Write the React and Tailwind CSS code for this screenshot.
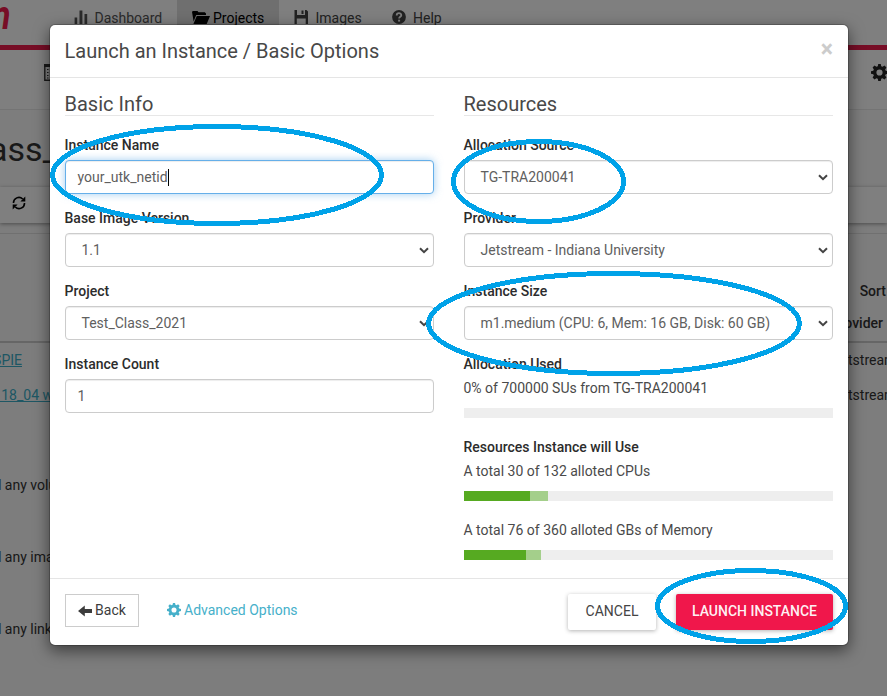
import React from "react";

const GearIcon = ({ className }) => (
  <svg viewBox="0 0 16 16" className={className} fill="currentColor">
    <path
      fillRule="evenodd"
      d="M6.8 0h2.4l.4 2.1 1.3.6L12.700 1.500l1.800 1.800-1.200 1.800.6 1.300 2.100.4v2.400l-2.100.4-.6 1.300 1.200 1.800-1.800 1.800-1.800-1.200-1.300.6-.4 2.100H6.800l-.4-2.100-1.300-.6-1.800 1.200-1.800-1.800 1.200-1.800-.6-1.300L0 9.200V6.800l2.100-.4.6-1.300L1.500 3.300l1.800-1.800 1.800 1.200 1.300-.6zM8 5.100a2.900 2.900 0 100 5.800 2.900 2.900 0 000-5.800z"
    />
  </svg>
);

const StatsIcon = () => (
  <svg viewBox="0 0 14 14" className="size-[14px] shrink-0" fill="currentColor">
    <path d="M.6 7.500h2.600V14H.6zM5.500 .5h2.900V14H5.500zM10.500 4h2.700v10h-2.700z" />
  </svg>
);

const FolderIcon = () => (
  <svg viewBox="0 0 18 14" className="h-[14px] w-[18px] shrink-0" fill="currentColor">
    <path d="M0 1.800L1 1h4.500l1 1.200h6.300L14 3.400V5H4.200L1.600 11.500zM4.800 6H18l-3.300 8H1.400z" />
  </svg>
);

const FloppyIcon = () => (
  <svg viewBox="0 0 14 14" className="size-[14px] shrink-0" fill="currentColor">
    <path fillRule="evenodd" d="M.5 0H3v5h8V0h1.500l1.500 1.500V14h-2.300V8.500H2.800V14H.5zM7.500 .5h2V4h-2z" />
  </svg>
);

const HelpIcon = () => (
  <svg viewBox="0 0 14 14" className="size-[14px] shrink-0">
    <circle cx="7" cy="7" r="6.900" fill="currentColor" />
    <path d="M4.700 5.500C4.700 2.500 9.300 2.500 9.300 5.200 9.300 6.700 7.100 6.800 7.100 8.500" fill="none" stroke="#fafafa" strokeWidth="1.800" />
    <path d="M6.100 9.700h2v1.900h-2z" fill="#fafafa" />
  </svg>
);

const ListIcon = () => (
  <svg viewBox="0 0 18 17" className="h-[17px] w-[18px] shrink-0" fill="none" stroke="currentColor">
    <path d="M.8 1v15.300h16.500V1z" strokeWidth="1.400" />
    <path d="M0 1.500h18" strokeWidth="3" />
    <path d="M3 5.500h1.500M3 8.500h1.500M3 11.500h1.500M3 14h1.500M6 5.500h9M6 8.500h9M6 11.500h9M6 14h9" />
  </svg>
);

const RefreshIcon = () => (
  <svg viewBox="0 0 14 14" className="size-[14px] shrink-0">
    <path d="M1.500 7A5.400 5.400 0 0110.700 3M12.500 7A5.400 5.400 0 013.300 11" fill="none" stroke="currentColor" strokeWidth="1.600" />
    <path d="M13.300 .5v5H8.400zM.7 13.500v-5h4.900z" fill="currentColor" />
  </svg>
);

const ArrowIcon = () => (
  <svg viewBox="0 0 14 12" className="h-[12px] w-[14px] shrink-0" fill="currentColor">
    <path d="M0 6L6.800 .5V4H14v4H6.800v3.500z" />
  </svg>
);

const Chevron = () => (
  <svg viewBox="0 0 10 7" className="h-[7px] w-[10px] shrink-0" fill="none" stroke="#444" strokeWidth="2">
    <path d="M1 1.200l4 4 4-4" />
  </svg>
);

function NavItem({ icon, label, className }) {
  return (
    <div className={`flex h-[45px] items-start pt-[10px] text-[14px] leading-4 ${className}`}>
      {icon}
      <span>{label}</span>
    </div>
  );
}

function PageBehind() {
  return (
    <div className="flex h-[696px] w-[887px] flex-col overflow-hidden bg-[#fafafa] text-[14px] text-[#333]">
      <div className="flex h-[50px] shrink-0 border-b-[5px] border-[#ef1a4d] bg-[#fff]">
        <div className="flex w-[62px] items-start justify-start overflow-hidden">
          <span className="-ml-[18px] -mt-[3px] origin-top-left scale-y-[1.2] text-[34px] font-bold italic leading-[30px] text-[#ef1a4d]">m</span>
        </div>
        <NavItem icon={<StatsIcon />} label="Dashboard" className="w-[115px] gap-[6.5px] pl-[12px] text-[#555]" />
        <NavItem icon={<FolderIcon />} label="Projects" className="w-[102px] gap-[3px] bg-[#dedede] pl-[15px] text-black" />
        <NavItem icon={<FloppyIcon />} label="Images" className="w-[98px] gap-[7.500px] pl-[15px] text-[#444]" />
        <NavItem icon={<HelpIcon />} label="Help" className="gap-[7px] pl-[15px] text-[#444]" />
      </div>
      <div className="flex h-[60px] shrink-0 items-start justify-between border-b border-[#e8e8e8] bg-[#fff] pl-[44px] pt-[14px]">
        <ListIcon />
        <GearIcon className="-mr-[1px] size-[17px] shrink-0 text-[#222]" />
      </div>
      <div className="flex h-[77px] w-[58px] shrink-0 items-center justify-end">
        <span className="text-[34px] leading-[40px]">ass_</span>
      </div>
      <div className="flex h-[36px] shrink-0 items-start bg-[#fff] pl-[12px] pt-[9px] text-black shadow-[0_1px_4px_rgba(0,0,0,0.4)]">
        <RefreshIcon />
      </div>
      <div className="mt-[10px] h-px shrink-0 bg-[#e0e0e0]" />
      <div className="mt-[48px] flex h-[20px] shrink-0 justify-end pr-[1px] font-medium leading-[19px]">Sort</div>
      <div className="mt-[11px] flex h-[30px] shrink-0 justify-end border-b-2 border-[#ccc] pr-[4px] font-medium leading-5">Provider</div>
      <div className="flex h-[35px] shrink-0 justify-between pt-[7px] leading-5">
        <div className="flex w-[22px] justify-end text-[#3caec8] underline">SPIE</div>
        <span className="w-[39px] overflow-hidden whitespace-nowrap">tstream</span>
      </div>
      <div className="flex h-[35px] shrink-0 justify-between pt-[7px] leading-5">
        <div className="flex w-[53px] justify-end whitespace-pre text-[#3caec8] underline">{" 18_04 w"}</div>
        <span className="w-[39px] overflow-hidden whitespace-nowrap">tstream</span>
      </div>
      <div className="mt-[62px] flex w-[57px] shrink-0 flex-col gap-[52px] leading-5">
        <div className="-ml-[6.5px] whitespace-nowrap">d any volumes</div>
        <div className="-ml-[6.5px] whitespace-nowrap">d any images</div>
        <div className="-ml-[6.5px] whitespace-nowrap">d any links</div>
      </div>
    </div>
  );
}

const Label = ({ children }) => (
  <div className="-ml-[0.5px] h-[25px] text-[14px] font-medium leading-[21px] text-[#2c2c2c]">{children}</div>
);

function Field({ label, value, select, focused }) {
  const look = focused
    ? "border-[#66afe9] shadow-[inset_0_1px_1px_rgba(0,0,0,0.075),0_0_8px_rgba(102,175,233,0.6)]"
    : "border-[#ccc] shadow-[inset_0_1px_1px_rgba(0,0,0,0.075)]";
  return (
    <div className="h-[73px]">
      <Label>{label}</Label>
      <div className={`flex h-[34px] items-center justify-between rounded-[4px] border bg-white text-[14px] text-[#606060] ${look} ${select ? "pl-[15.5px] pr-[4px]" : "pl-[11.5px]"}`}>
        <span className="flex items-center">
          {value}
          {focused && <span className="h-[17px] w-px bg-black" />}
        </span>
        {select && <Chevron />}
      </div>
    </div>
  );
}

function Meter({ used, extra, className }) {
  return (
    <div className={`flex h-[10px] bg-[#eee] ${className}`}>
      <div className="bg-[#56aa21]" style={{ width: used }} />
      <div className="bg-[#a4cf8b]" style={{ width: extra }} />
    </div>
  );
}

const SectionTitle = ({ children }) => (
  <h2 className="mb-[19px] h-[23px] border-b border-[#e7e7e7] text-[20px] leading-[22px] text-[#484848]">
    <span className="-ml-[0.5px]">{children}</span>
  </h2>
);

function LaunchDialog() {
  return (
    <div className="absolute left-[49px] top-[24px] flex h-[622px] w-[800px] flex-col rounded-[6px] border border-black/20 bg-white bg-clip-padding shadow-[0_5px_15px_rgba(0,0,0,0.5)]">
      <div className="flex h-[53px] shrink-0 items-center justify-between border-b border-[#e5e5e5] px-[15px]">
        <h1 className="-ml-[0.5px] text-[20px] leading-6 text-[#484848]">Launch an Instance / Basic Options</h1>
        <span className="pb-[3px] text-[23px] font-bold leading-6 text-[#ccc]">×</span>
      </div>
      <div className="flex h-[500px] shrink-0 gap-[30px] px-[15px] pt-[15px]">
        <div className="w-[369px]">
          <SectionTitle>Basic Info</SectionTitle>
          <Field label="Instance Name" value="your_utk_netid" focused />
          <Field label="Base Image Version" value="1.1" select />
          <Field label="Project" value="Test_Class_2021" select />
          <Field label="Instance Count" value="1" />
        </div>
        <div className="w-[369px] text-[14px] leading-5 text-[#4a4a4a]">
          <SectionTitle>Resources</SectionTitle>
          <Field label="Allocation Source" value="TG-TRA200041" select />
          <Field label="Provider" value="Jetstream - Indiana University" select />
          <Field label="Instance Size" value="m1.medium (CPU: 6, Mem: 16 GB, Disk: 60 GB)" select />
          <Label>Allocation Used</Label>
          <div className="-ml-[0.5px] -mt-px">0% of 700000 SUs from TG-TRA200041</div>
          <Meter used="0px" extra="0px" className="mt-[10px]" />
          <div className="mt-[19px]">
            <Label>Resources Instance will Use</Label>
          </div>
          <div className="-ml-[0.5px] -mt-px">A total 30 of 132 alloted CPUs</div>
          <Meter used="66px" extra="18px" className="mt-[10px]" />
          <div className="-ml-[0.5px] mt-[19px]">A total 76 of 360 alloted GBs of Memory</div>
          <Meter used="62px" extra="15px" className="mt-[10px]" />
        </div>
      </div>
      <div className="flex flex-1 items-start border-t border-[#e5e5e5] px-[15px] pt-[15px] text-[14px]">
        <button className="flex h-[33px] w-[74px] items-center justify-center gap-[3px] border border-[#ccc] text-[#3c3c3c]">
          <ArrowIcon />
          Back
        </button>
        <div className="ml-[28px] flex h-[32px] items-center gap-[3px] text-[#46b0ca]">
          <GearIcon className="size-[14px] shrink-0" />
          Advanced Options
        </div>
        <button className="ml-auto h-[36px] w-[88px] rounded-[2px] bg-white pb-[2px] text-[#444] shadow-[0_1px_4px_rgba(0,0,0,0.3)]">CANCEL</button>
        <button className="ml-[20px] h-[36px] w-[157px] rounded-[2px] bg-[#f0174b] pb-[2px] font-medium text-white/95 shadow-[0_1px_4px_rgba(0,0,0,0.3)]">LAUNCH INSTANCE</button>
      </div>
    </div>
  );
}

export default function App() {
  return (
    <div className="relative h-[696px] w-[887px] overflow-hidden font-[Roboto,sans-serif]">
      <PageBehind />
      <div className="absolute inset-0 bg-black/50" />
      <LaunchDialog />
      <svg className="absolute inset-0" width="887" height="696" fill="none" stroke="#00a2e8" strokeWidth="5" shapeRendering="crispEdges">
        <ellipse cx="217" cy="175" rx="164.500" ry="48.500" />
        <ellipse cx="538.500" cy="181.500" rx="85" ry="40" />
        <ellipse cx="614" cy="323.500" rx="185.500" ry="50" />
        <ellipse cx="751.500" cy="606" rx="94" ry="35.500" />
      </svg>
    </div>
  );
}
